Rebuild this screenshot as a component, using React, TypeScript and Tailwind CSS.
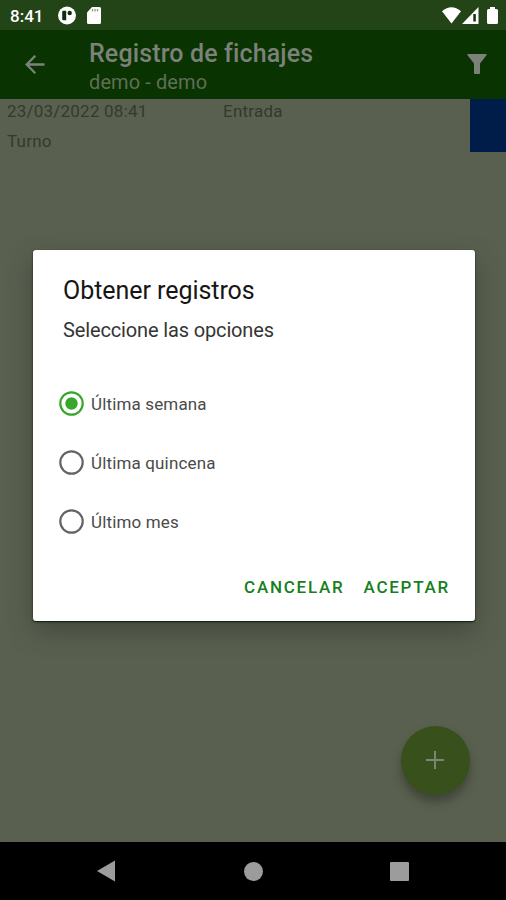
import { useState } from "react";

function StatusBar() {
  return (
    <div className="flex h-[30px] shrink-0 items-start bg-[#224416] pl-[10px] pr-[8px] text-white">
      <span className="mt-[4px] w-[48px] text-[17px] font-medium leading-6">8:41</span>
      <svg className="mt-[6px]" width="18" height="19" viewBox="0 0 18 19">
        <circle cx="9" cy="9.5" r="9" fill="currentColor" />
        <path d="M4.200 6Q4.200 4.800 5.400 4.800H8.200V14.300H5.400Q4.200 14.300 4.200 13z" fill="#102d0c" />
        <circle cx="11.700" cy="7" r="2.200" fill="#102d0c" />
      </svg>
      <svg className="ml-[10px] mt-[7px]" width="16" height="17" viewBox="0 0 16 17">
        <path d="M6 0h7.500Q15 0 15 1.500v14q0 1.500-1.500 1.500h-11Q1 17 1 15.500V5.500z" fill="currentColor" />
        <path d="M6.500 2v2.500M9 2v2.500M11.500 2v2.500" stroke="#8b9a85" strokeWidth="1.300" />
      </svg>
      <div className="ml-auto flex items-start">
        <svg className="mt-[7px]" width="19" height="17" viewBox="0 0 19 17">
          <path d="M0 4.200Q9.500-3.600 19 4.200L9.500 16.500z" fill="currentColor" />
        </svg>
        <svg className="ml-[1px] mt-[7px]" width="17" height="17" viewBox="0 0 17 17">
          <path d="M0 17 16.500 0v17z" fill="currentColor" />
          <path d="M11.300 7h2.500v7.500h-2.500z" fill="#163010" />
        </svg>
        <svg className="ml-[8px] mt-[7px]" width="11" height="17" viewBox="0 0 11 17">
          <path d="M3 0h5v2h1.500Q11 2 11 3.500v12q0 1.500-1.500 1.500h-8Q0 17 0 15.500v-12Q0 2 1.500 2H3z" fill="currentColor" />
        </svg>
      </div>
    </div>
  );
}

function AppBar() {
  return (
    <header className="flex h-[69px] shrink-0 items-start bg-[#093300] pl-[25px] pr-[19px] text-[#7c817a]">
      <svg className="mt-[25px]" width="20" height="20" viewBox="0 0 20 20" fill="none" stroke="currentColor" strokeWidth="2.300">
        <path d="M19.500 9.500H2M10.300 .7 1.700 9.500l8.600 8.800" />
      </svg>
      <div className="ml-[44px]">
        <h1 className="mt-[9px] text-[25px] font-medium leading-[30px] tracking-[0.130px]">Registro de fichajes</h1>
        <p className="-mt-px text-[20px] leading-[28px] tracking-[0.100px] text-[#5f6f56]">demo - demo</p>
      </div>
      <svg className="ml-auto mt-[24px]" width="20" height="20" viewBox="0 0 20 20" fill="currentColor">
        <path d="M1 0h18q1 0 .7 1L13 9.500V19q0 1-1 1H8q-1 0-1-1V9.500L.3 1Q0 0 1 0z" />
      </svg>
    </header>
  );
}

function RecordRow() {
  return (
    <div className="flex h-[53px] shrink-0 text-[17px] leading-[24px] tracking-[0.220px] text-[#333a2c]">
      <div className="w-[223px] pl-[7px]">
        <p>23/03/2022 08:41</p>
        <p className="mt-[6px]">Turno</p>
      </div>
      <p>Entrada</p>
      <div className="ml-auto w-[36px] bg-[#001c48]" />
    </div>
  );
}

const options = ["Última semana", "Última quincena", "Último mes"];

function RecordsDialog() {
  const [selected, setSelected] = useState(0);
  return (
    <section className="flex h-[371px] w-[442px] flex-col rounded-[3px] bg-white pl-[26px] pr-[25px] pt-[25px] shadow-[0_1px_2px_#071b05,0_10px_26px_rgba(40,45,35,0.450)]">
      <h2 className="pl-[4px] text-[25px] font-normal leading-[32px] tracking-[-0.050px] text-[#161616]">Obtener registros</h2>
      <p className="mt-[9px] pl-[4px] text-[20px] leading-[28px] tracking-[-0.140px] text-[#353535]">Seleccione las opciones</p>
      <div className="mt-[30px] flex flex-col">
        {options.map((label, index) => (
          <button key={label} className="flex h-[59px] items-center gap-[7px] text-left" onClick={() => setSelected(index)}>
            <span className={selected === index ? "text-[#38a62b]" : "text-[#646464]"}>
              <svg width="25" height="25" viewBox="0 0 25 25">
                <circle cx="12.500" cy="12.500" r="11.200" fill="none" stroke="currentColor" strokeWidth="2.200" />
                {selected === index && <circle cx="12.500" cy="12.500" r="6.200" fill="currentColor" />}
              </svg>
            </span>
            <span className="text-[17px] leading-6 tracking-[0.150px] text-[#4a4a4a]">{label}</span>
          </button>
        ))}
      </div>
      <div className="mt-[24px] flex justify-end gap-[19px] text-[17px] font-medium leading-6 tracking-[1.750px] text-[#168020]">
        <button>CANCELAR</button>
        <button>ACEPTAR</button>
      </div>
    </section>
  );
}

function NavigationBar() {
  return (
    <nav className="flex h-[58px] shrink-0 bg-black pl-[96px] pt-[18px] text-[#9c9c9c]">
      <svg width="20" height="22" viewBox="0 0 20 22" fill="currentColor">
        <path d="M1 11 19 .5v21z" />
      </svg>
      <div className="ml-[128px] mt-[1.500px] size-[19px] rounded-full bg-[#9c9c9c]" />
      <div className="ml-[127px] mt-[1.500px] size-[19px] rounded-[1px] bg-[#9c9c9c]" />
    </nav>
  );
}

export default function App() {
  return (
    <div className="relative flex h-[900px] w-[506px] flex-col overflow-hidden bg-[#5a6050] font-['Roboto',sans-serif]">
      <StatusBar />
      <AppBar />
      <main className="flex flex-1 flex-col">
        <RecordRow />
        <button className="mb-[47px] ml-auto mr-[36px] mt-auto grid size-[69px] place-items-center rounded-full bg-[#38501b] pb-[1px] pr-[1px] text-[#798575] shadow-[0_7px_10px_rgba(30,38,25,0.450)]">
          <svg width="18" height="18" viewBox="0 0 18 18" stroke="currentColor" strokeWidth="2">
            <path d="M9 0v18M0 9h18" />
          </svg>
        </button>
      </main>
      <NavigationBar />
      <div className="absolute left-[33px] top-[250px]">
        <RecordsDialog />
      </div>
    </div>
  );
}
